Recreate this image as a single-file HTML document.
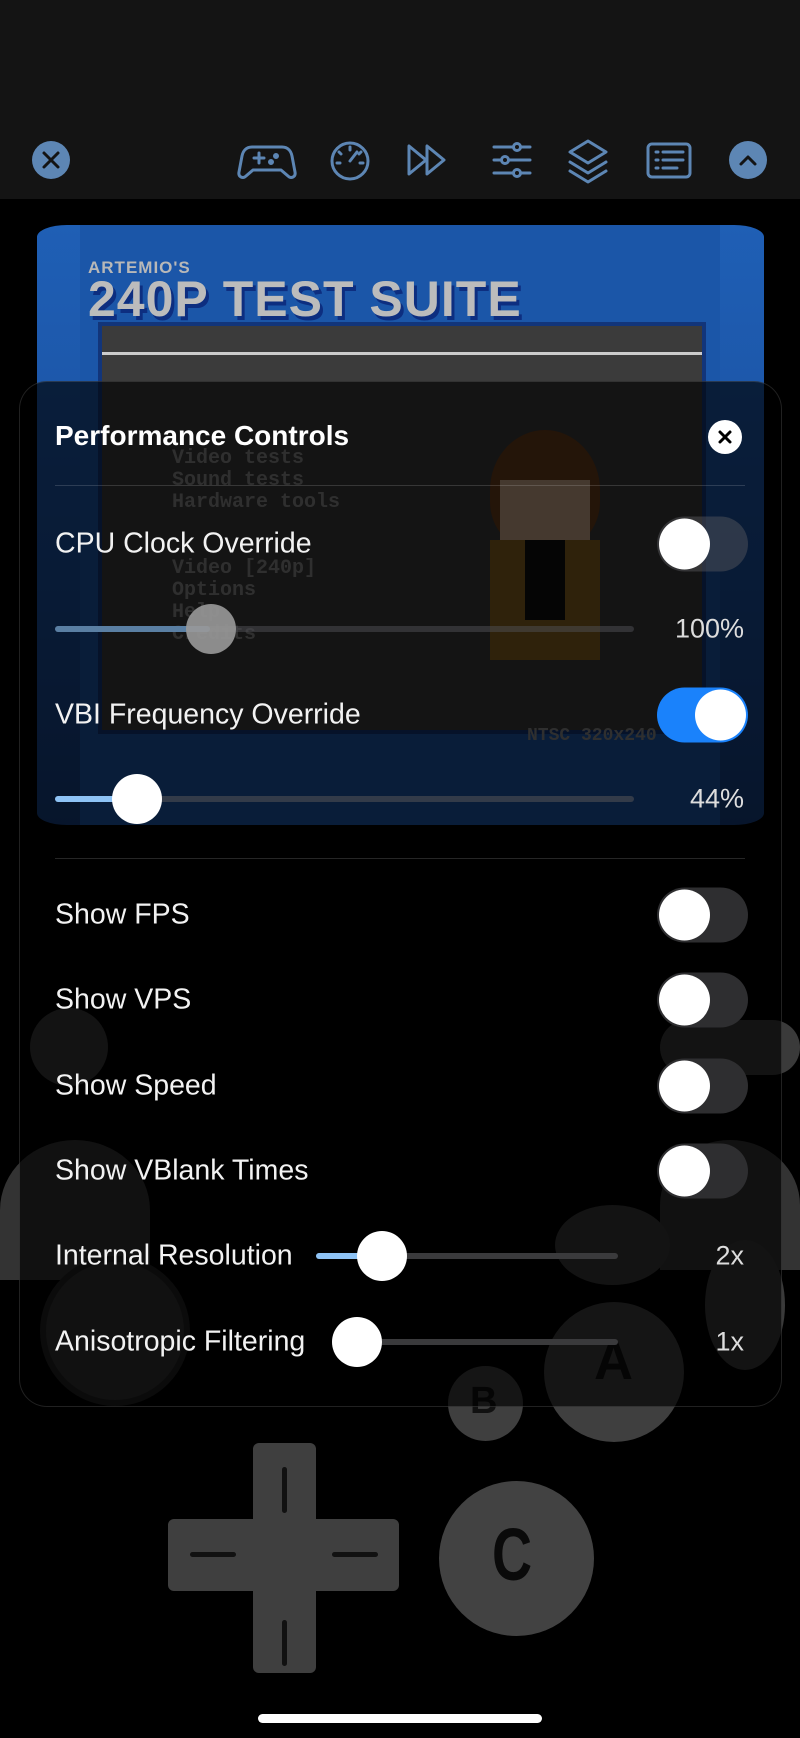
<!DOCTYPE html>
<html><head><meta charset="utf-8"><style>
*{margin:0;padding:0;box-sizing:border-box}
body{width:800px;height:1738px;background:#000;position:relative;overflow:hidden;font-family:"Liberation Sans",sans-serif;color:#fff}
.a{position:absolute}
.lbl{position:absolute;left:55px;font-size:28.5px;color:#f2f2f2;transform:translateY(-50%)}
.val{position:absolute;right:56px;font-size:27px;color:#ddd;transform:translateY(-50%)}
.tg{position:absolute;left:657px;width:91px;height:55px;border-radius:28px;background:#2e2e30;transform:translateY(-50%)}
.tg::after{content:"";position:absolute;left:2px;top:2px;width:51px;height:51px;border-radius:50%;background:#fff}
.tg.on{background:#1a82fb}.tg.on::after{left:38px}
.tr{position:absolute;height:6px;border-radius:3px;background:#3a3a3c;transform:translateY(-50%)}
.fl{position:absolute;height:6px;border-radius:3px;background:#8ec3f5;transform:translateY(-50%)}
.th{position:absolute;width:50px;height:50px;border-radius:50%;background:#fff;transform:translate(-50%,-50%)}
.mono{position:absolute;font-family:"Liberation Mono",monospace;font-size:20px;color:#8a8a8a;font-weight:bold;line-height:22px}
.g{position:absolute;background:#3f3f3f}
</style></head><body>
<div class="a" style="left:0;top:0;width:800px;height:199px;background:#141414"></div>
<svg class="a" style="left:0;top:130px" width="800" height="60" viewBox="0 130 800 60" fill="none" stroke="#5d86b4" stroke-width="3" stroke-linecap="round" stroke-linejoin="round">
<circle cx="51" cy="160" r="19" fill="#5d86b4" stroke="none"/>
<path d="M44 153l14 14M58 153l-14 14" stroke="#141414" stroke-width="3"/>
<path d="M252 147h30c6 0 9 4 10 9l3 16c1 5-4 7-7 4l-7-6h-28l-7 6c-3 3-8 1-7-4l3-16c1-5 4-9 10-9z"/>
<path d="M254 158h10M259 153v10"/><circle cx="276" cy="156" r="1.5" fill="#5d86b4"/><circle cx="271" cy="162" r="1.5" fill="#5d86b4"/>
<circle cx="350" cy="161" r="18"/><path d="M350 161l7-9"/><path d="M339 152l2 2M350 147v3M361 152l-2 2M337 163h3M360 163h3"/>
<path d="M409 146v28l17-14zM427 146v28l17-14z"/>
<path d="M494 147h36M494 160h36M494 173h36"/><circle cx="517" cy="147" r="3.5" fill="#141414"/><circle cx="505" cy="160" r="3.5" fill="#141414"/><circle cx="517" cy="173" r="3.5" fill="#141414"/>
<path d="M588 141l18 11-18 11-18-11z"/><path d="M570 162l18 11 18-11M570 171l18 11 18-11"/>
<rect x="648" y="144" width="42" height="33" rx="4"/><path d="M656 152h2M663 152h20M656 160h2M663 160h20M656 168h2M663 168h14"/>
<circle cx="748" cy="160" r="19" fill="#5d86b4" stroke="none"/><path d="M741 164l7-7 7 7" stroke="#141414"/>
</svg>
<div class="a" style="left:37px;top:225px;width:727px;height:600px;background:linear-gradient(#1f5fb5,#1a4f9e 60%,#163f80);border-radius:30px/12px"></div>
<div class="a" style="left:80px;top:225px;width:640px;height:600px;background:#1b56a8"></div>
<div class="a" style="left:88px;top:258px;font-weight:bold;font-size:17px;color:#b8b8b8;letter-spacing:1px">ARTEMIO'S</div>
<div class="a" style="left:88px;top:270px;font-weight:bold;font-size:50px;color:#bcbcbc;text-shadow:3px 4px 0 #0d2e80;letter-spacing:1px">240P TEST SUITE</div>
<div class="a" style="left:98px;top:322px;width:608px;height:412px;background:#3b3b3b;border:4px solid #12357a"></div>
<div class="a" style="left:102px;top:352px;width:600px;height:3px;background:#ccc"></div>
<div class="mono" style="left:172px;top:448px">Video tests<br>Sound tests<br>Hardware tools<br><br><br>Video [240p]<br>Options<br>Help<br>Credits</div>
<div class="a" style="left:490px;top:430px;width:110px;height:120px;border-radius:50% 50% 40% 40%;background:#6a3e1c"></div>
<div class="a" style="left:500px;top:480px;width:90px;height:90px;background:#c9a78a"></div>
<div class="a" style="left:490px;top:540px;width:110px;height:120px;background:#8a6420"></div>
<div class="a" style="left:525px;top:540px;width:40px;height:80px;background:#111"></div>
<div class="mono" style="left:527px;top:725px;font-size:18px">NTSC 320x240</div>
<div class="a" style="left:30px;top:1008px;width:78px;height:78px;border-radius:50%;background:#3a3a3a"></div>
<div class="a" style="left:660px;top:1020px;width:140px;height:55px;border-radius:28px;background:#3a3a3a"></div>
<div class="a" style="left:0;top:1140px;width:150px;height:140px;border-radius:100% 100% 0 0;background:#333"></div>
<div class="a" style="left:660px;top:1140px;width:140px;height:130px;border-radius:100% 100% 0 0;background:#333"></div>
<div class="a" style="left:40px;top:1256px;width:150px;height:150px;border-radius:50%;background:#333;border:6px solid #222"></div>
<div class="a" style="left:555px;top:1205px;width:115px;height:80px;border-radius:50%;background:#3a3a3a"></div>
<div class="a" style="left:705px;top:1240px;width:80px;height:130px;border-radius:50%;background:#3a3a3a"></div>
<div class="a" style="left:544px;top:1302px;width:140px;height:140px;border-radius:50%;background:#3f3f3f"></div>
<div class="a" style="left:448px;top:1366px;width:75px;height:75px;border-radius:50%;background:#3f3f3f"></div>
<div class="a" style="left:594px;top:1330px;font-size:54px;font-weight:bold;color:#111">A</div>
<div class="a" style="left:470px;top:1380px;font-size:38px;font-weight:bold;color:#111">B</div>
<div class="a" style="left:19px;top:381px;width:763px;height:1026px;border-radius:28px;background:rgba(0,0,0,0.66);border:1.5px solid rgba(255,255,255,0.13)"></div>
<div class="a" style="left:55px;top:420px;font-size:28px;font-weight:bold">Performance Controls</div>
<div class="a" style="left:708px;top:420px;width:34px;height:34px;border-radius:50%;background:#fff"></div>
<svg class="a" style="left:708px;top:420px" width="34" height="34"><path d="M12 12l10 10M22 12l-10 10" stroke="#000" stroke-width="3" stroke-linecap="round"/></svg>
<div class="a" style="left:55px;top:485px;width:690px;height:1px;background:rgba(255,255,255,0.15)"></div>
<div class="lbl" style="top:544px">CPU Clock Override</div>
<div class="tg" style="top:544px;background:rgba(90,90,95,0.45)"></div>
<div class="tr" style="left:55px;top:629px;width:579px;background:rgba(80,80,85,0.5)"></div>
<div class="fl" style="left:55px;top:629px;width:155px;background:#5a7fa3"></div>
<div class="th" style="left:211px;top:629px;background:#999;opacity:.9"></div>
<div class="val" style="top:629px">100%</div>
<div class="lbl" style="top:715px">VBI Frequency Override</div>
<div class="tg on" style="top:715px"></div>
<div class="tr" style="left:55px;top:799px;width:579px;background:rgba(80,80,85,0.6)"></div>
<div class="fl" style="left:55px;top:799px;width:82px"></div>
<div class="th" style="left:137px;top:799px"></div>
<div class="val" style="top:799px">44%</div>
<div class="a" style="left:55px;top:858px;width:690px;height:1px;background:rgba(255,255,255,0.15)"></div>
<div class="lbl" style="top:915px">Show FPS</div><div class="tg" style="top:915px"></div>
<div class="lbl" style="top:1000px">Show VPS</div><div class="tg" style="top:1000px"></div>
<div class="lbl" style="top:1086px">Show Speed</div><div class="tg" style="top:1086px"></div>
<div class="lbl" style="top:1171px">Show VBlank Times</div><div class="tg" style="top:1171px"></div>
<div class="lbl" style="top:1256px">Internal Resolution</div>
<div class="tr" style="left:316px;top:1256px;width:302px"></div>
<div class="fl" style="left:316px;top:1256px;width:66px"></div>
<div class="th" style="left:382px;top:1256px"></div>
<div class="val" style="top:1256px">2x</div>
<div class="lbl" style="top:1342px">Anisotropic Filtering</div>
<div class="tr" style="left:357px;top:1342px;width:261px"></div>
<div class="th" style="left:357px;top:1342px"></div>
<div class="val" style="top:1342px">1x</div>
<div class="g" style="left:168px;top:1519px;width:231px;height:72px;border-radius:6px"></div>
<div class="g" style="left:253px;top:1443px;width:63px;height:230px;border-radius:6px"></div>
<div class="a" style="left:282px;top:1467px;width:5px;height:46px;background:#111;border-radius:3px"></div>
<div class="a" style="left:282px;top:1620px;width:5px;height:46px;background:#111;border-radius:3px"></div>
<div class="a" style="left:190px;top:1552px;width:46px;height:5px;background:#111;border-radius:3px"></div>
<div class="a" style="left:332px;top:1552px;width:46px;height:5px;background:#111;border-radius:3px"></div>
<div class="a" style="left:439px;top:1481px;width:155px;height:155px;border-radius:50%;background:#424242"></div>
<div class="a" style="left:492px;top:1518px;font-size:74px;font-weight:bold;color:#0a0a0a;line-height:74px;transform:scaleX(.75);transform-origin:left">C</div>
<div class="a" style="left:258px;top:1714px;width:284px;height:9px;border-radius:5px;background:#fff"></div>
</body></html>
